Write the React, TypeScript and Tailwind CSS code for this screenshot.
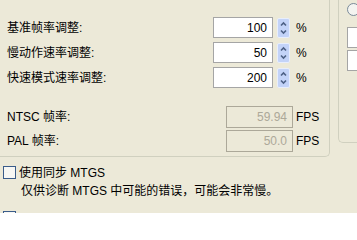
import React from "react";

const font = { fontFamily: '"Liberation Sans", "Noto Sans CJK SC", sans-serif' };

function Spinner() {
  return (
    <div className="ml-[4px] flex h-[20px] w-[13px] flex-col justify-center rounded-[2px] border border-[#e8eefc] bg-[#c3d3f8]">
      <svg width="11" height="18" viewBox="0 0 11 18" className="mx-auto">
        <path d="M3 6.5 L5.5 4 L8 6.5" fill="none" stroke="#4d6185" strokeWidth="1.6" />
        <path d="M3 11.5 L5.5 14 L8 11.5" fill="none" stroke="#4d6185" strokeWidth="1.6" />
      </svg>
    </div>
  );
}

function RateRow({ label, value }: { label: string; value: string }) {
  return (
    <div className="flex h-[21px] items-center">
      <span className="w-[213px] shrink-0 pl-[7px] text-[12px] leading-none text-black">{label}</span>
      <div className="flex h-[21px] w-[60px] items-center justify-end border border-[#a5a5a5] bg-white pr-[5px] text-[12px] text-black">
        {value}
      </div>
      <Spinner />
      <span className="ml-[6px] text-[12px] text-black">%</span>
    </div>
  );
}

function FpsRow({ label, value }: { label: string; value: string }) {
  return (
    <div className="flex h-[22px] items-center">
      <span className="w-[226px] shrink-0 pl-[7px] text-[12px] leading-none text-black">{label}</span>
      <div className="flex h-[22px] w-[67px] items-center justify-end border border-[#aca899] bg-[#ece9d8] pr-[5px] text-[12px] text-[#aca899]">
        {value}
      </div>
      <span className="ml-[3px] text-[12px] text-black">FPS</span>
    </div>
  );
}

export default function App() {
  return (
    <div style={font} className="h-[213px] w-[357px] overflow-hidden bg-[#ece9d8]">
      <div className="flex">
        {/* 左侧分组框 */}
        <div className="flex h-[157px] w-[330px] shrink-0 flex-col rounded-br-[5px] border-r border-b border-[#d0d0bf] pt-[17px]">
          <div className="flex flex-col gap-[4px]">
            <RateRow label="基准帧率调整:" value="100" />
            <RateRow label="慢动作速率调整:" value="50" />
            <RateRow label="快速模式速率调整:" value="200" />
          </div>
          <div className="mt-[18px] flex flex-col gap-[2px]">
            <FpsRow label="NTSC 帧率:" value="59.94" />
            <FpsRow label="PAL 帧率:" value="50.0" />
          </div>
        </div>
        {/* 右侧分组框 */}
        <div className="ml-[8px] flex h-[143px] w-[40px] shrink-0 flex-col rounded-bl-[5px] border-l border-b border-[#d0d0bf] pl-[8px]">
          <div className="mt-[3px] h-[13px] w-[13px] rounded-full border border-[#7a8a99] bg-[#f4f4f0]" />
          <div className="mt-[11px] h-[21px] w-[30px] border border-[#a5a5a5] bg-white" />
          <div className="mt-[2px] h-[21px] w-[30px] border border-[#a5a5a5] bg-white" />
          <span className="ml-[10px] mt-[10px] text-[12px] leading-none text-black">:</span>
        </div>
      </div>
      <div className="mt-[9px] flex items-center pl-[3px]">
        <div className="h-[13px] w-[13px] border border-[#3a5c8a] bg-[#f7f7f4]" />
        <span className="ml-[3px] text-[12px] leading-none text-black">使用同步 MTGS</span>
      </div>
      <div className="mt-[6px] pl-[21px] text-[12px] leading-none text-black">
        仅供诊断 MTGS 中可能的错误，可能会非常慢。
      </div>
      <div className="mt-[14px] flex items-center pl-[3px]">
        <div className="h-[13px] w-[13px] border border-[#3a5c8a] bg-[#f7f7f4]" />
      </div>
    </div>
  );
}
